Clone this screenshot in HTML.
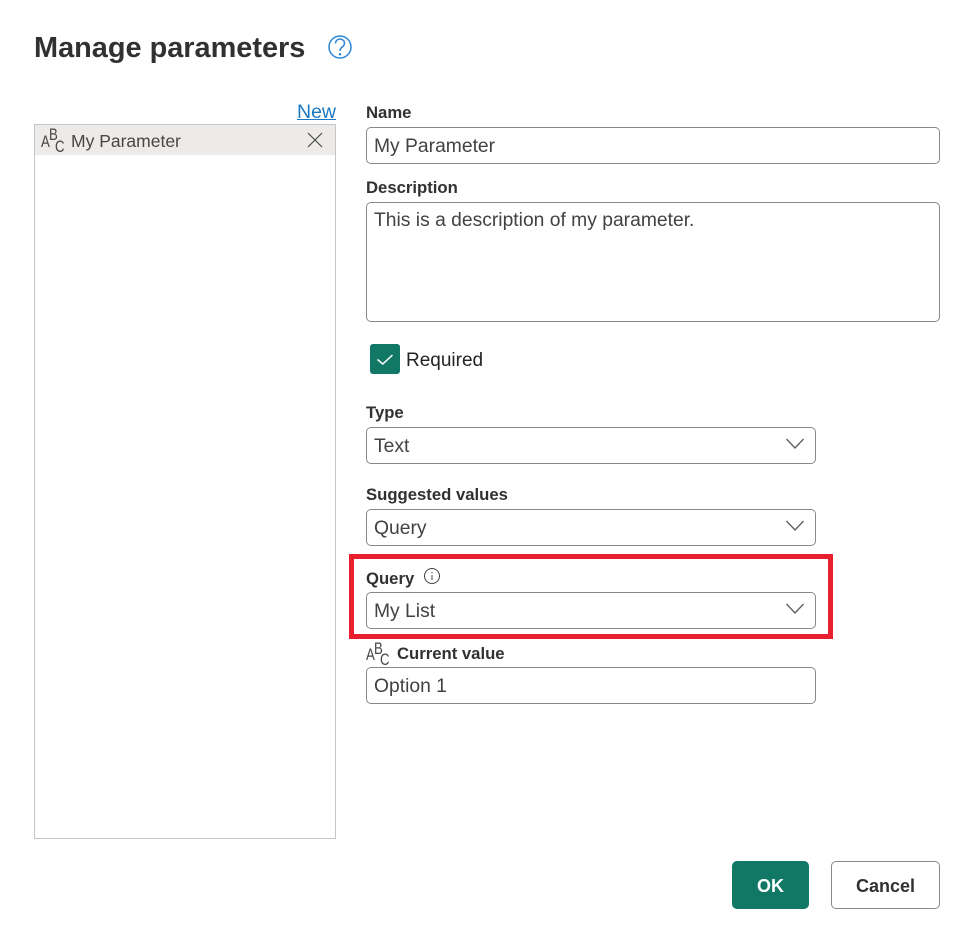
<!DOCTYPE html>
<html>
<head>
<meta charset="utf-8">
<style>
html,body{margin:0;padding:0;background:#fff;}
body{width:973px;height:940px;position:relative;overflow:hidden;font-family:"Liberation Sans",sans-serif;color:#323130;}
.a{position:absolute;white-space:nowrap;}
.lbl{font-size:16.7px;font-weight:bold;line-height:22px;color:#323130;}
.box{position:absolute;box-sizing:border-box;border:1px solid #8a8886;border-radius:5px;background:#fff;font-size:19.3px;line-height:37px;padding-left:7px;color:#424242;white-space:nowrap;}
.abc{position:absolute;font-size:16.500px;line-height:20px;color:#484644;}
.abc span{position:absolute;display:block;transform:scaleX(.8);transform-origin:0 0;}
svg{position:absolute;overflow:visible;}
</style>
</head>
<body>
<div class="a" style="left:34px;top:30px;font-size:28.9px;font-weight:bold;line-height:36px;color:#323130;">Manage parameters</div>
<svg style="left:328px;top:35px" width="24" height="24" viewBox="0 0 24 24" fill="none" stroke="#2b88d8" stroke-width="1.500"><circle cx="12" cy="12" r="11"/><path d="M7.500 8.500c0-2.600 2-4.500 4.500-4.500s4.500 1.800 4.500 4.200c0 3.800-4.500 3.600-4.500 7.800"/><circle cx="12" cy="19.300" r="0.500" fill="#2b88d8"/></svg>

<div class="a" style="left:297px;top:100px;font-size:19.500px;line-height:24px;color:#1b78c2;text-decoration:underline;">New</div>

<div style="position:absolute;left:34px;top:124px;width:302px;height:715px;box-sizing:border-box;border:1px solid #c8c6c4;background:#fff;"></div>
<div style="position:absolute;left:35px;top:125px;width:300px;height:30px;background:#edebe9;"></div>
<div class="abc" style="left:41px;top:127px;"><span style="left:0;top:5px;">A</span><span style="left:8px;top:-2px;">B</span><span style="left:14px;top:10px;">C</span></div>
<div class="a" style="left:71px;top:130px;font-size:17.500px;line-height:22px;color:#484644;">My Parameter</div>
<svg style="left:307px;top:132px" width="16" height="16" viewBox="0 0 16 16" fill="none" stroke="#424242" stroke-width="1.100"><path d="M1 1L15 15M15 1L1 15"/></svg>

<div class="a lbl" style="left:366px;top:102px;">Name</div>
<div class="box" style="left:366px;top:127px;width:574px;height:37px;">My Parameter</div>
<div class="a lbl" style="left:366px;top:177px;">Description</div>
<div class="box" style="left:366px;top:202px;width:574px;height:120px;line-height:35px;">This is a description of my parameter.</div>

<div style="position:absolute;left:370px;top:344px;width:30px;height:30px;border-radius:3px;background:#117865;"></div>
<svg style="left:370px;top:344px" width="30" height="30" viewBox="0 0 30 30" fill="none" stroke="#fff" stroke-width="1.500"><path d="M7.500 15.500L12.800 20L22.500 11"/></svg>
<div class="a" style="left:406px;top:349px;font-size:19px;line-height:24px;color:#242424;">Required</div>

<div class="a lbl" style="left:366px;top:402px;">Type</div>
<div class="box" style="left:366px;top:427px;width:450px;height:37px;">Text</div>
<svg style="left:786px;top:438px" width="18" height="12" viewBox="0 0 18 12" fill="none" stroke="#605e5c" stroke-width="1.300"><path d="M0.500 1L9 10L17.500 1"/></svg>

<div class="a lbl" style="left:366px;top:484px;">Suggested values</div>
<div class="box" style="left:366px;top:509px;width:450px;height:37px;">Query</div>
<svg style="left:786px;top:520px" width="18" height="12" viewBox="0 0 18 12" fill="none" stroke="#605e5c" stroke-width="1.300"><path d="M0.500 1L9 10L17.500 1"/></svg>

<div class="a lbl" style="left:366px;top:568px;">Query</div>
<svg style="left:423px;top:567px" width="18" height="18" viewBox="0 0 18 18" fill="none" stroke="#424242" stroke-width="1"><circle cx="9" cy="9" r="7.500"/><path d="M9 8V13M9 5V6.200"/></svg>
<div class="box" style="left:366px;top:592px;width:450px;height:37px;">My List</div>
<svg style="left:786px;top:603px" width="18" height="12" viewBox="0 0 18 12" fill="none" stroke="#605e5c" stroke-width="1.300"><path d="M0.500 1L9 10L17.500 1"/></svg>

<div style="position:absolute;left:349px;top:554px;width:484px;height:85px;box-sizing:border-box;border:5px solid #e81f2d;"></div>

<div class="abc" style="left:366px;top:642px;"><span style="left:0;top:3px;">A</span><span style="left:8px;top:-3px;">B</span><span style="left:14px;top:8px;">C</span></div>
<div class="a lbl" style="left:397px;top:643px;">Current value</div>
<div class="box" style="left:366px;top:667px;width:450px;height:37px;">Option 1</div>

<div class="a" style="left:732px;top:861px;width:77px;height:48px;border-radius:5px;background:#117865;color:#fff;font-size:18px;font-weight:bold;line-height:50px;text-align:center;">OK</div>
<div class="a" style="left:831px;top:861px;width:109px;height:48px;box-sizing:border-box;border:1px solid #8a8886;border-radius:5px;background:#fff;color:#323130;font-size:18px;font-weight:bold;line-height:48px;text-align:center;">Cancel</div>
</body>
</html>
